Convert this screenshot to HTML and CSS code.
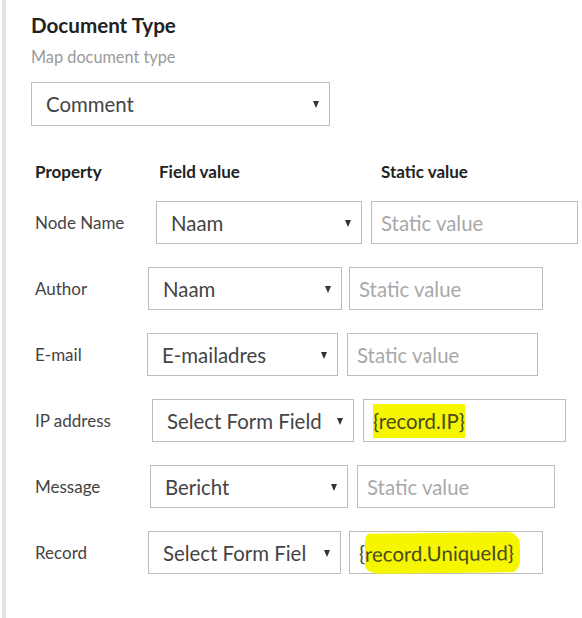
FILE: index.html
```html
<!DOCTYPE html>
<html>
<head>
<meta charset="utf-8">
<link rel="stylesheet" href="styles.css">
</head>
<body>
<div class="page">
  <h2 class="title">Document Type</h2>
  <p class="subtitle">Map document type</p>
  <div class="select doc-select"><span class="sel-text">Comment</span><span class="arrow"></span></div>

  <div class="table">
    <div class="head">
      <span class="h-prop">Property</span>
      <span class="h-field">Field value</span>
      <span class="h-static">Static value</span>
    </div>
    <div class="rows">
      <div class="row r1">
        <span class="label">Node Name</span>
        <div class="select field"><span class="sel-text">Naam</span><span class="arrow"></span></div>
        <div class="input static"><span class="ph">Static value</span></div>
      </div>
      <div class="row r2">
        <span class="label">Author</span>
        <div class="select field"><span class="sel-text">Naam</span><span class="arrow"></span></div>
        <div class="input static"><span class="ph">Static value</span></div>
      </div>
      <div class="row r3">
        <span class="label">E-mail</span>
        <div class="select field"><span class="sel-text">E-mailadres</span><span class="arrow"></span></div>
        <div class="input static"><span class="ph">Static value</span></div>
      </div>
      <div class="row r4">
        <span class="label">IP address</span>
        <div class="select field"><span class="sel-text">Select Form Field</span><span class="arrow"></span></div>
        <div class="input static"><span class="val hl">{record.IP}</span></div>
      </div>
      <div class="row r5">
        <span class="label">Message</span>
        <div class="select field"><span class="sel-text">Bericht</span><span class="arrow"></span></div>
        <div class="input static"><span class="ph">Static value</span></div>
      </div>
      <div class="row r6">
        <span class="label">Record</span>
        <div class="select field"><span class="sel-text">Select Form Fiel</span><span class="arrow"></span></div>
        <div class="input static"><span class="val">{<span class="hl marker">record.UniqueId}</span></span></div>
      </div>
    </div>
  </div>
</div>
</body>
</html>
```
FILE: styles.css
```css
html, body {
  margin: 0;
  padding: 0;
  background: #ffffff;
}
body {
  font-family: Lato, "Open Sans", "Liberation Sans", sans-serif;
  color: #333;
}
.page {
  margin-left: 2px;
  border-left: 4px solid #e3e3e3;
  min-height: 618px;
  box-sizing: border-box;
  padding: 13px 0 0 25px;
}
.title {
  margin: 0;
  font-size: 20.6px;
  line-height: 24px;
  font-weight: 700;
  color: #222;
}
.subtitle {
  margin: 10px 0 0 0;
  font-size: 16.3px;
  line-height: 19px;
  color: #9a9a9a;
}
.select, .input {
  box-sizing: border-box;
  height: 43px;
  border: 1px solid #bdbdbd;
  background: #fff;
  display: flex;
  align-items: center;
  position: relative;
  font-size: 20.4px;
  flex: none;
}
.select {
  padding: 0 26px 0 14px;
}
.sel-text {
  color: #444;
  white-space: nowrap;
  overflow: hidden;
  display: block;
}
.arrow {
  position: absolute;
  right: 10px;
  top: 50%;
  margin-top: -3px;
  width: 0;
  height: 0;
  border-left: 3.5px solid transparent;
  border-right: 3.5px solid transparent;
  border-top: 7px solid #333;
}
.doc-select {
  margin-top: 16px;
  width: 299px;
  height: 44px;
}
.input {
  padding: 0 9px;
}
.ph {
  color: #a9a9a9;
  white-space: nowrap;
}
.val {
  color: #4a4a20;
  white-space: nowrap;
}
.hl {
  background: #f6f600;
  display: inline-block;
  padding: 5px 0;
  line-height: 24px;
}
.marker {
  padding: 8px 6px 8px 0;
  border-radius: 4px 12px 8px 16px / 10px 12px 14px 8px;
  transform: rotate(-0.6deg);
}
.table {
  padding-left: 4px;
}
.head {
  margin-top: 36px;
  display: flex;
  font-size: 17px;
  font-weight: 700;
  line-height: 20px;
  color: #222;
}
.h-prop { width: 124px; }
.h-field { width: 222px; }
.rows {
  margin-top: 19px;
  display: flex;
  flex-direction: column;
  gap: 23px;
}
.row {
  display: flex;
  align-items: center;
  height: 43px;
}
.label {
  font-size: 17px;
  color: #444;
  flex: none;
  width: var(--lw);
}
.row .field { width: var(--sw); }
.row .static { width: var(--iw); margin-left: var(--gap); }
.r1 { --lw: 121px; --sw: 206px; --gap: 9px; --iw: 207px; }
.r2 { --lw: 113px; --sw: 194px; --gap: 7px; --iw: 194px; }
.r3 { --lw: 112px; --sw: 191px; --gap: 9px; --iw: 191px; }
.r4 { --lw: 117px; --sw: 202px; --gap: 9px; --iw: 203px; }
.r5 { --lw: 115px; --sw: 198px; --gap: 9px; --iw: 198px; }
.r6 { --lw: 113px; --sw: 193px; --gap: 8px; --iw: 194px; }
```
